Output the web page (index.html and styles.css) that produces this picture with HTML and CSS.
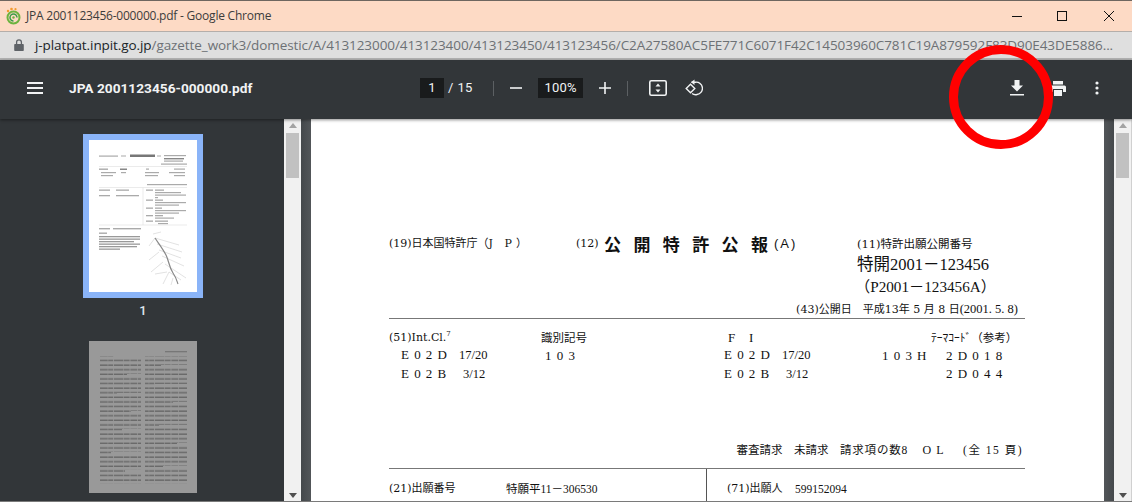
FILE: index.html
```html
<!DOCTYPE html>
<html lang="ja">
<head>
<meta charset="utf-8">
<title>JPA 2001123456-000000.pdf - Google Chrome</title>
<link rel="stylesheet" href="styles.css">
</head>
<body>
<div class="window">
  <header class="titlebar">
    <svg class="favicon" width="16" height="18" viewBox="0 0 16 18">
      <circle cx="8.5" cy="10.5" r="6" fill="none" stroke="#6cb33f" stroke-width="2"/>
      <path d="M8.5 14a3.5 3.5 0 1 1 3.5-3.5" fill="none" stroke="#3c9c4a" stroke-width="1.5"/>
      <circle cx="8.5" cy="10.5" r="1.2" fill="#6cb33f"/>
      <circle cx="3" cy="4" r="1.2" fill="#f39a2d"/><circle cx="6.5" cy="2" r="1.3" fill="#f39a2d"/><circle cx="10.5" cy="2.2" r="1.1" fill="#f39a2d"/>
    </svg>
    <span class="window-title">JPA 2001123456-000000.pdf - Google Chrome</span>
    <div class="win-controls">
      <svg width="12" height="12" viewBox="0 0 12 12"><path d="M1 6.5h10" stroke="#111" fill="none"/></svg>
      <svg width="12" height="12" viewBox="0 0 12 12"><rect x=".5" y="1.500" width="9" height="9" stroke="#111" fill="none"/></svg>
      <svg width="12" height="12" viewBox="0 0 12 12"><path d="M1 1l10 10M11 1L1 11" stroke="#111" fill="none"/></svg>
    </div>
  </header>
  <div class="urlbar">
    <svg class="lock" width="10" height="12" viewBox="0 0 10 12"><path d="M1 5h8a.8.8 0 0 1 .8.8v5.4a.8.8 0 0 1-.8.8H1a.8.8 0 0 1-.8-.8V5.800A.8.8 0 0 1 1 5z" fill="#5f6368"/><path d="M2.600 5V3.200a2.400 2.400 0 0 1 4.800 0V5" fill="none" stroke="#5f6368" stroke-width="1.300"/></svg>
    <span class="url"><span class="host">j-platpat.inpit.go.jp</span>/gazette_work3/domestic/A/413123000/413123400/413123450/413123456/C2A27580AC5FE771C6071F42C14503960C781C19A879592F83D90E43DE5886...</span>
  </div>
  <div class="toolbar">
    <svg class="menu" width="16" height="12" viewBox="0 0 16 12"><path d="M0 1h16M0 6h16M0 11h16" stroke="#f1f3f4" stroke-width="2" fill="none"/></svg>
    <span class="doc-title">JPA 2001123456-000000.pdf</span>
    <div class="pager">
      <span class="field page-field">1</span>
      <span class="page-total">/ 15</span>
      <span class="sep"></span>
      <svg class="ic-minus" width="12" height="12" viewBox="0 0 12 12"><path d="M0 6h12" stroke="#f1f3f4" stroke-width="1.600"/></svg>
      <span class="field zoom-field">100%</span>
      <svg class="ic-plus" width="12" height="12" viewBox="0 0 12 12"><path d="M0 6h12M6 0v12" stroke="#f1f3f4" stroke-width="1.600"/></svg>
      <span class="sep sep-b"></span>
      <svg class="ic-fit" width="18" height="16" viewBox="0 0 18 16"><rect x=".8" y=".8" width="16.400" height="14.400" rx="1.500" fill="none" stroke="#f1f3f4" stroke-width="1.600"/><path d="M9 3.500l2.500 3h-5zM9 12.500l-2.500-3h5z" fill="#f1f3f4"/></svg>
      <svg class="ic-rot" width="18" height="18" viewBox="0 0 18 18"><path d="M1.200 9.500L5.500 5.200l4.300 4.300-4.300 4.300z" fill="none" stroke="#f1f3f4" stroke-width="1.400"/><path d="M6.500 3.200h4a6 6 0 0 1 1.500 12.300 6 6 0 0 1-5-1" fill="none" stroke="#f1f3f4" stroke-width="1.400"/><path d="M9.500 0.500L6 3.200l3.500 2.700z" fill="#f1f3f4"/></svg>
    </div>
    <div class="actions">
      <svg width="14" height="16" viewBox="0 0 14 16"><path d="M4.500 0h5v5.500H13L7 11.500 1 5.500h3.500zM0 14h14v1.500H0z" fill="#f1f3f4"/></svg>
      <svg width="16" height="15" viewBox="0 0 16 15"><path d="M3 0h10v3.500H3zM1.500 4.500h13A1.500 1.500 0 0 1 16 6v5h-3V8H3v3H0V6a1.500 1.500 0 0 1 1.500-1.500zM4 9h8v6H4z" fill="#f1f3f4"/></svg>
      <svg width="4" height="14" viewBox="0 0 4 14"><circle cx="2" cy="2" r="1.600" fill="#f1f3f4"/><circle cx="2" cy="7" r="1.600" fill="#f1f3f4"/><circle cx="2" cy="12" r="1.600" fill="#f1f3f4"/></svg>
    </div>
  </div>
  <main class="viewer">
    <aside class="sidebar">
      <div class="thumb-selected">
        <svg class="thumb-svg" width="108" height="152" viewBox="0 0 108 152">
          <rect width="108" height="152" fill="#fff"/>
          <g class="blur-fine" fill="#aaa">
            <rect x="10" y="15.500" width="19" height="1.200"/><rect x="32" y="15.500" width="5" height="1"/>
            <rect x="41" y="14.500" width="25" height="2.500" fill="#777"/><rect x="68" y="15.500" width="4" height="1"/>
            <rect x="75" y="15" width="22" height="1.200"/><rect x="75" y="18" width="20" height="1.400" fill="#888"/><rect x="75" y="20.500" width="19" height="1.200"/><rect x="72" y="23.500" width="26" height="1.200"/>
            <rect x="10" y="28.500" width="9" height="1.400"/><rect x="31" y="28.500" width="7" height="1.500" fill="#888"/><rect x="57" y="28.500" width="3" height="1.200"/><rect x="85" y="28.500" width="11" height="1.200"/>
            <rect x="12" y="32" width="15" height="1.200"/><rect x="32" y="32" width="5" height="1.200"/><rect x="56" y="32" width="14" height="1.200"/><rect x="80" y="32" width="16" height="1.200"/>
            <rect x="12" y="35" width="12" height="1.200"/><rect x="56" y="35" width="13" height="1.200"/><rect x="85" y="35" width="11" height="1.200"/>
            <rect x="58" y="44" width="40" height="1.200"/>
            <rect x="10" y="49.500" width="11" height="1.300"/><rect x="27" y="49.500" width="13" height="1.300"/>
            <rect x="57" y="49.500" width="7" height="1.300"/><rect x="66" y="49.500" width="9" height="1.300"/><rect x="66" y="52" width="26" height="1.200"/><rect x="66" y="54.500" width="31" height="1.200"/><rect x="66" y="57" width="3" height="1.200"/>
            <rect x="10" y="55" width="11" height="1.300"/><rect x="27" y="55" width="23" height="1.300"/>
            <rect x="57" y="59.500" width="7" height="1.300"/><rect x="66" y="59.500" width="8" height="1.300"/><rect x="66" y="62" width="31" height="1.200"/><rect x="66" y="64.500" width="24" height="1.200"/>
            <rect x="57" y="67.500" width="7" height="1.300"/><rect x="66" y="67.500" width="7" height="1.300"/><rect x="66" y="70" width="31" height="1.200"/><rect x="66" y="72.500" width="24" height="1.200"/>
            <rect x="57" y="75" width="7" height="1.300"/><rect x="66" y="75" width="8" height="1.300"/><rect x="66" y="77.500" width="19" height="1.200"/>
            <rect x="57" y="80.500" width="7" height="1.300"/><rect x="66" y="80.500" width="13" height="1.300"/><rect x="69" y="83" width="10" height="1.200"/>
            <rect x="10" y="88" width="11" height="1.400"/><rect x="24" y="88" width="28" height="1.400"/>
            <rect x="10" y="92.500" width="8" height="1.400"/>
            <rect x="10" y="96" width="41" height="1.300" fill="#999"/><rect x="10" y="98.500" width="41" height="1.300" fill="#999"/><rect x="10" y="101" width="35" height="1.300" fill="#999"/><rect x="10" y="103.500" width="41" height="1.300" fill="#999"/><rect x="10" y="106" width="38" height="1.300" fill="#999"/><rect x="10" y="108.500" width="21" height="1.300" fill="#999"/>
          </g>
          <g fill="none" stroke="#ddd" stroke-width=".6">
            <path d="M10 26.500h88M10 47.500h88M10 85h88M54 47.500V85"/>
          </g>
          <g class="blur-fine" fill="none" stroke="#c4c4c4" stroke-width=".5">
            <path d="M66 98l24 7M68 104l25 8M70 110l22 8M73 116l22 10M76 124l21 14M80 132l12 8M66 98l-6 8M70 112l-10 8M74 122l-12 10M80 132l-6 12M84 138l-2 7M64 94l8-2M78 132l-12 2"/>
          </g>
          <path class="blur-fine" d="M66 98c4 6 8 11 11 17s3 12 7 18 4 9 5 11" fill="none" stroke="#888" stroke-width="1.200"/>
        </svg>
      </div>
      <span class="thumb-label">1</span>
      <div class="thumb-dim">
        <svg class="thumb-svg" width="108" height="152" viewBox="0 0 108 152">
          <defs>
            <pattern id="lines" width="41" height="4.600" patternUnits="userSpaceOnUse">
              <path d="M0 1.200h41" stroke="#686868" stroke-width="1.500" stroke-dasharray="7 .7 11 .5 5 .8 9 .6 6 .4"/>
            </pattern>
          </defs>
          <rect width="108" height="152" fill="#999"/>
          <g class="blur-fine">
            <rect x="11" y="15.500" width="41" height="127" fill="url(#lines)"/>
            <rect x="56" y="15.500" width="42" height="127" fill="url(#lines)"/>
            <rect x="76" y="10" width="22" height="1.300" fill="#777"/>
            <g fill="#999">
              <rect x="25" y="15" width="28" height="3"/><rect x="38" y="33" width="15" height="3"/><rect x="28" y="52" width="25" height="3"/><rect x="42" y="70" width="11" height="3"/><rect x="33" y="88" width="20" height="3"/><rect x="22" y="111" width="31" height="3"/><rect x="36" y="129" width="17" height="3"/>
              <rect x="72" y="24" width="27" height="3"/><rect x="66" y="43" width="33" height="3"/><rect x="84" y="61" width="15" height="3"/><rect x="70" y="84" width="29" height="3"/><rect x="88" y="102" width="11" height="3"/><rect x="74" y="125" width="25" height="3"/>
            </g>
          </g>
        </svg>
      </div>
    </aside>
    <div class="scrollbar">
      <span class="arrow-up"></span>
      <span class="sb-thumb"></span>
      <span class="sb-spacer"></span>
      <span class="arrow-down"></span>
    </div>
    <div class="gutter">
      <article class="paper">
        <div class="head">
          <div class="head-row">
            <span class="c-a">(19)日本国特許庁（<span class="jp">J P</span>）</span>
            <span class="c-b">(12)</span>
            <strong class="pub-title">公開特許公<span class="pub-last">報</span></strong>
            <span class="c-c">(A)</span>
            <span class="c-d">(11)特許出願公開番号</span>
          </div>
          <div class="head-num big">特開2001－123456</div>
          <div class="head-num sub">（P2001－123456A）</div>
          <div class="date">(43)公開日　平成13年 5 月 8 日<span class="date-d">(2001. 5. 8)</span></div>
        </div>
        <hr class="rule">
        <div class="cls-row first">
          <span class="w1">(51)Int.Cl.<sup>7</sup></span><span class="w2 kind">識別記号</span><span class="w3 spaced">F I</span><span class="w4"></span><span class="w5 theme">ﾃｰﾏｺｰﾄﾞ（参考）</span>
        </div>
        <div class="cls-row">
          <span class="w1 ind"><span class="spaced code">E02D</span><span class="cls-n">17/20</span></span><span class="w2 ind2 spaced">103</span><span class="w3"><span class="spaced code">E02D</span><span class="cls-n">17/20</span></span><span class="w4 spaced">103H</span><span class="w5 spaced">2D018</span>
        </div>
        <div class="cls-row">
          <span class="w1 ind"><span class="spaced code">E02B</span><span class="cls-n n3">3/12</span></span><span class="w2"></span><span class="w3"><span class="spaced code">E02B</span><span class="cls-n n3">3/12</span></span><span class="w4"></span><span class="w5 spaced">2D044</span>
        </div>
        <div class="exam">審査請求　未請求　<span class="wide">請求項の数8</span>　<span class="ol">OL</span>　<span class="wide pages">(全 15 頁)</span></div>
        <hr class="rule tight">
        <div class="split">
          <div class="split-l"><span class="s-label">(21)出願番号</span><span class="s-val">特願平11－306530</span></div>
          <div class="split-r"><span class="s-label2">(71)出願人</span><span class="s-val">599152094</span></div>
        </div>
      </article>
    </div>
    <div class="scrollbar end">
      <span class="arrow-up"></span>
      <span class="sb-thumb"></span>
      <span class="sb-spacer"></span>
      <span class="arrow-down"></span>
    </div>
  </main>
</div>
<svg class="ring" width="112" height="112" viewBox="0 0 112 112"><circle cx="56" cy="56" r="47.500" fill="none" stroke="#ff0000" stroke-width="9"/></svg>
</body>
</html>
```
FILE: styles.css
```css
* { box-sizing: border-box; }
html, body { margin: 0; padding: 0; }
body { width: 1132px; height: 502px; overflow: hidden; position: relative; background: #323639; }
.window { width: 1132px; height: 502px; display: flex; flex-direction: column; border-top: 1px solid #6e6660; border-bottom: 1px solid #7a7a7a; overflow: hidden; }

.titlebar { height: 31px; flex: none; background: #fddac5; border-bottom: 1px solid #b4aeaa; display: flex; align-items: center; padding-left: 5px; }
.favicon { margin-right: 5px; flex: none; }
.window-title { font: 12px/16px "Open Sans", sans-serif; color: #3c3c3c; letter-spacing: -.22px; }
.win-controls { margin-left: auto; display: flex; gap: 34px; padding-right: 17px; }

.urlbar { height: 28px; flex: none; background: #dfdfdf; border-bottom: 2px solid #b3b3b3; display: flex; align-items: center; padding-left: 14px; }
.lock { flex: none; margin-right: 11px; }
.url { font: 13.5px/18px "Open Sans", sans-serif; color: #6d7175; white-space: nowrap; letter-spacing: -.08px; }
.host { color: #202428; }

.toolbar { height: 59px; flex: none; background: #323639; display: flex; align-items: center; color: #f1f3f4; position: relative; z-index: 2; box-shadow: 0 1px 3px rgba(0,0,0,.45); padding-bottom: 3px; }
.menu { margin-left: 27px; flex: none; }
.doc-title { margin-left: 26px; width: 351px; font: 700 13.700px/18px Roboto, sans-serif; color: #f1f3f4; }
.pager { display: flex; align-items: center; font: 13px/20px Roboto, sans-serif; }
.field { background: #191b1c; height: 20px; text-align: center; color: #f1f3f4; display: block; }
.page-field { width: 24px; }
.zoom-field { width: 45px; margin-left: 16px; letter-spacing: .2px; }
.page-total { margin-left: 4px; width: 45px; letter-spacing: .4px; }
.sep { width: 1px; height: 15px; background: #5c6063; }
.ic-minus { margin-left: 16px; }
.ic-plus { margin-left: 16px; }
.sep-b { margin-left: 16px; }
.ic-fit { margin-left: 21px; }
.ic-rot { margin-left: 18px; }
.actions { margin-left: 307px; display: flex; align-items: center; }
.actions svg:nth-child(1) { margin-right: 26px; }
.actions svg:nth-child(2) { margin-right: 29px; }

.viewer { flex: 1; min-height: 0; display: flex; overflow: hidden; }
.sidebar { width: 284px; flex: none; background: #323639; display: flex; flex-direction: column; align-items: flex-start; padding: 15px 0 0 83px; }
.thumb-selected { width: 120px; height: 164px; border: 6px solid #8ab4f8; flex: none; }
.thumb-svg { display: block; }
.blur-fine { filter: blur(.5px); }
.thumb-label { width: 120px; text-align: center; font: 500 13px/18px Roboto, sans-serif; color: #dfe6ee; margin-top: 4px; }
.thumb-dim { margin: 21px 0 0 6px; width: 108px; height: 152px; flex: none; }

.scrollbar { width: 17px; flex: none; background: #f1f1f1; display: flex; flex-direction: column; align-items: center; padding: 4px 0 3px; }
.scrollbar.end { width: 18px; border-right: 1px solid #d0d0d0; }
.arrow-up { width: 0; height: 0; border: 4px solid transparent; border-top: 0; border-bottom: 5px solid #a3a3a3; flex: none; }
.arrow-down { width: 0; height: 0; border: 4px solid transparent; border-bottom: 0; border-top: 5px solid #505050; flex: none; }
.sb-thumb { width: 13px; height: 45px; background: #c1c1c1; margin-top: 5px; flex: none; }
.sb-spacer { flex: 1; }

.gutter { flex: 1; min-width: 0; display: flex; padding: 0 10px; background: linear-gradient(90deg, #44484b 0, #525659 10px, #525659 calc(100% - 10px), #45494c 100%); }
.paper { flex: 1; background: #fff; padding: 116px 79px 0 78px; color: #111; font: 11px/14px "DejaVu Serif", "Noto Sans CJK JP", serif; overflow: hidden; }

.head-row { display: flex; align-items: center; height: 18px; white-space: nowrap; }
.c-a { width: 187px; }
.jp { letter-spacing: 4px; }
.c-b { width: 28px; }
.pub-title { width: 164px; font: 700 17px/18px "Noto Sans CJK JP", sans-serif; letter-spacing: 12.400px; white-space: nowrap; }
.pub-last { letter-spacing: 0; }
.c-c { width: 83px; margin-left: 6px; font: 13px/18px "Liberation Sans", sans-serif; letter-spacing: 2px; }
.c-d { font-size: 11.500px; }
.head-num { padding-left: 468px; white-space: nowrap; font-family: "Liberation Serif", "Noto Sans CJK JP", serif; }
.big { font-size: 16.500px; line-height: 22px; margin-top: 1px; }
.sub { font-size: 15.200px; line-height: 22px; padding-left: 466px; }
.date { text-align: right; padding-right: 7px; height: 18px; line-height: 22px; white-space: nowrap; }
.date-d { font: 12.500px/22px "Liberation Serif", serif; }

.rule { border: 0; height: 1px; background: #777; margin: 2px 0 0; }
.rule.tight { margin-top: 11px; }
.cls-row { display: flex; height: 18.500px; align-items: center; white-space: nowrap; }
.cls-row.first { margin-top: 10px; height: 17.500px; }
sup { font-size: 7px; line-height: 0; }
.w1 { width: 152px; }
.w2 { width: 183px; }
.w3 { width: 158px; }
.w4 { width: 64px; }
.w5 { flex: 1; }
.kind { font-size: 11.500px; }
.ind { padding-left: 12px; }
.ind2 { padding-left: 4px; }
.first .w3 { padding-left: 4px; }
.first .w5 { margin-left: -15px; font-size: 11.500px; }
.spaced { letter-spacing: 5.200px; font: 13px/14px "Liberation Serif", serif; }
.code { display: inline-block; width: 58px; }
.cls-n { font: 12.500px/14px "Liberation Serif", serif; }
.n3 { margin-left: 4px; }
.exam { text-align: right; margin-top: 59px; padding-right: 2px; height: 14px; white-space: nowrap; font-size: 11.500px; font-family: "Liberation Serif", "Noto Sans CJK JP", serif; }
.wide { letter-spacing: .8px; }
.pages { letter-spacing: 1.500px; }
.ol { letter-spacing: 5px; font-size: 12px; margin: 0 3px; }
.split { display: flex; height: 34px; }
.split-l { width: 318px; border-right: 1px solid #555; padding-top: 13px; display: flex; }
.split-r { padding: 13px 0 0 20px; display: flex; }
.s-label { width: 117px; }
.s-label2 { width: 68px; }
.s-val { font: 11.500px/14px "Liberation Serif", "Noto Sans CJK JP", serif; }

.ring { position: absolute; left: 945px; top: 41px; pointer-events: none; z-index: 5; }
```
